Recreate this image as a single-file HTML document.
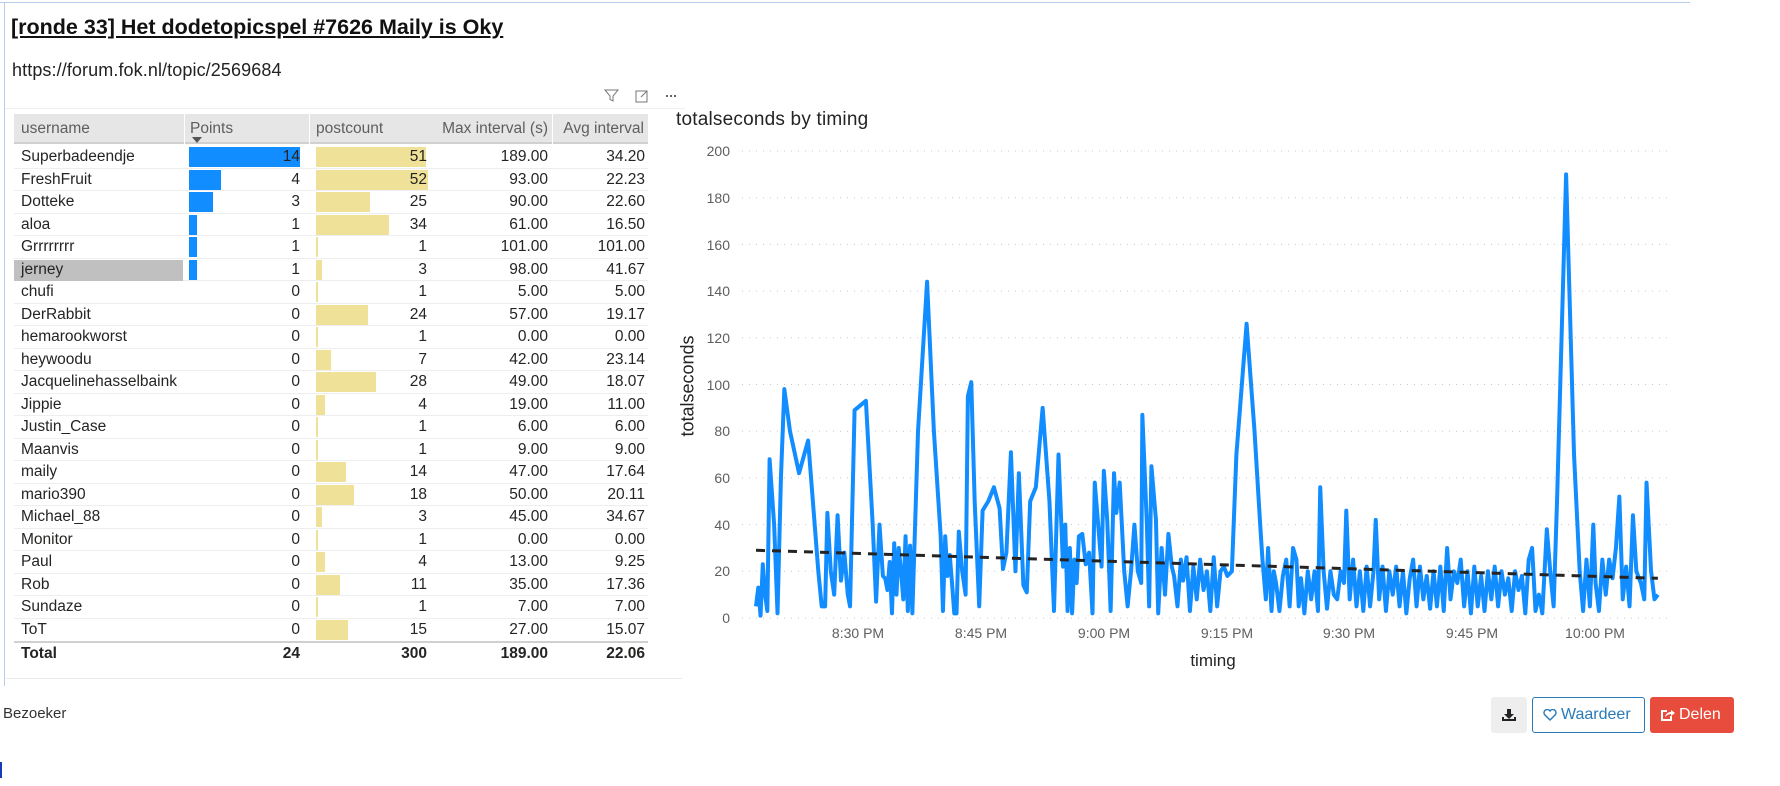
<!DOCTYPE html>
<html><head><meta charset="utf-8"><style>
*{margin:0;padding:0;box-sizing:border-box}
body{width:1780px;height:786px;background:#fff;font-family:"Liberation Sans",sans-serif;position:relative;overflow:hidden;color:#252423}
.a{position:absolute}
.title{left:11px;top:13px;font-size:21.5px;line-height:28px;font-weight:bold;text-decoration:underline;color:#111;letter-spacing:0}
.url{left:12px;top:60px;font-size:18px;color:#222;letter-spacing:0.1px}
.hdr{left:14px;top:114px;width:634px;height:30px;background:#e6e6e6;border-bottom:2px solid #d0d0d0}
.h{position:absolute;top:6px;font-size:15.5px;color:#605e5c}
.row{position:absolute;left:14px;width:634px;height:22.5px;border-bottom:1px solid #eee;font-size:15.5px}
.row span{position:absolute;top:2px}
.bb{position:absolute;background:#118dff;top:1px;height:20px;left:175px}
.by{position:absolute;background:#f0e199;top:1px;height:20px;left:302px}
.yl{position:absolute;right:0;font-size:14px;color:#605e5c}
.xl{position:absolute;font-size:14px;color:#605e5c;transform:translateX(-50%)}
</style></head><body>
<div class="a" style="left:0;top:2px;width:1690px;height:1px;background:#b9cdea"></div>
<div class="a" style="left:4px;top:2px;width:1px;height:684px;background:#b9cdea"></div>
<div class="a title">[ronde 33] Het dodetopicspel #7626 Maily is Oky</div>
<div class="a url">https://forum.fok.nl/topic/2569684</div>
<svg class="a" style="left:604px;top:88px" width="80" height="16" viewBox="0 0 80 16">
<path d="M1 2h13l-5 6v5l-3-1.5V8z" fill="none" stroke="#777" stroke-width="1"/>
<rect x="32" y="3" width="11" height="11" fill="none" stroke="#777"/>
<path d="M37 9l6-6M39 3h4v4" stroke="#777" fill="none"/>
<circle cx="63" cy="8" r="1.1" fill="#555"/><circle cx="67" cy="8" r="1.1" fill="#555"/><circle cx="71" cy="8" r="1.1" fill="#555"/>
</svg>
<div class="a" style="left:5px;top:108px;width:680px;height:1px;background:#eee"></div>
<div class="a hdr">
<span class="h" style="left:7px">username</span>
<span class="h" style="left:176px">Points</span>
<span class="a" style="left:178px;top:23px;width:0;height:0;border-left:5px solid transparent;border-right:5px solid transparent;border-top:6px solid #555"></span>
<span class="h" style="left:302px">postcount</span>
<span class="h" style="right:100px">Max interval (s)</span>
<span class="h" style="right:4px">Avg interval</span>
<div class="a" style="left:170px;top:0;width:1px;height:30px;background:#fff"></div>
<div class="a" style="left:295px;top:0;width:1px;height:30px;background:#fff"></div>
<div class="a" style="left:538px;top:0;width:1px;height:30px;background:#fff"></div>
</div>
<div class="a" style="left:14px;top:641px;width:634px;height:2px;background:#d0d0d0"></div>
<div class="row" style="top:643px;border:none;font-weight:bold">
<span style="left:7px">Total</span><span style="right:348px">24</span><span style="right:221px">300</span><span style="right:100px">189.00</span><span style="right:3px">22.06</span></div>
<div class="a" style="left:6px;top:678px;width:676px;height:1px;background:#eaeaea"></div>

<div class="row" style="top:146px"><div class="bb" style="width:111px"></div><div class="by" style="width:110px"></div><span style="left:7px">Superbadeendje</span><span style="right:348px">14</span><span style="right:221px">51</span><span style="right:100px">189.00</span><span style="right:3px">34.20</span></div>
<div class="row" style="top:168.5px"><div class="bb" style="width:32px"></div><div class="by" style="width:112px"></div><span style="left:7px">FreshFruit</span><span style="right:348px">4</span><span style="right:221px">52</span><span style="right:100px">93.00</span><span style="right:3px">22.23</span></div>
<div class="row" style="top:191px"><div class="bb" style="width:24px"></div><div class="by" style="width:54px"></div><span style="left:7px">Dotteke</span><span style="right:348px">3</span><span style="right:221px">25</span><span style="right:100px">90.00</span><span style="right:3px">22.60</span></div>
<div class="row" style="top:213.5px"><div class="bb" style="width:8px"></div><div class="by" style="width:73px"></div><span style="left:7px">aloa</span><span style="right:348px">1</span><span style="right:221px">34</span><span style="right:100px">61.00</span><span style="right:3px">16.50</span></div>
<div class="row" style="top:236px"><div class="bb" style="width:8px"></div><div class="by" style="width:2px"></div><span style="left:7px">Grrrrrrrr</span><span style="right:348px">1</span><span style="right:221px">1</span><span style="right:100px">101.00</span><span style="right:3px">101.00</span></div>
<div class="row" style="top:258.5px"><div class="a" style="left:0;top:1px;width:169px;height:21px;background:#c0c0c0"></div><div class="bb" style="width:8px"></div><div class="by" style="width:6px"></div><span style="left:7px">jerney</span><span style="right:348px">1</span><span style="right:221px">3</span><span style="right:100px">98.00</span><span style="right:3px">41.67</span></div>
<div class="row" style="top:281px"><div class="by" style="width:2px"></div><span style="left:7px">chufi</span><span style="right:348px">0</span><span style="right:221px">1</span><span style="right:100px">5.00</span><span style="right:3px">5.00</span></div>
<div class="row" style="top:303.5px"><div class="by" style="width:52px"></div><span style="left:7px">DerRabbit</span><span style="right:348px">0</span><span style="right:221px">24</span><span style="right:100px">57.00</span><span style="right:3px">19.17</span></div>
<div class="row" style="top:326px"><div class="by" style="width:2px"></div><span style="left:7px">hemarookworst</span><span style="right:348px">0</span><span style="right:221px">1</span><span style="right:100px">0.00</span><span style="right:3px">0.00</span></div>
<div class="row" style="top:348.5px"><div class="by" style="width:15px"></div><span style="left:7px">heywoodu</span><span style="right:348px">0</span><span style="right:221px">7</span><span style="right:100px">42.00</span><span style="right:3px">23.14</span></div>
<div class="row" style="top:371px"><div class="by" style="width:60px"></div><span style="left:7px">Jacquelinehasselbaink</span><span style="right:348px">0</span><span style="right:221px">28</span><span style="right:100px">49.00</span><span style="right:3px">18.07</span></div>
<div class="row" style="top:393.5px"><div class="by" style="width:9px"></div><span style="left:7px">Jippie</span><span style="right:348px">0</span><span style="right:221px">4</span><span style="right:100px">19.00</span><span style="right:3px">11.00</span></div>
<div class="row" style="top:416px"><div class="by" style="width:2px"></div><span style="left:7px">Justin_Case</span><span style="right:348px">0</span><span style="right:221px">1</span><span style="right:100px">6.00</span><span style="right:3px">6.00</span></div>
<div class="row" style="top:438.5px"><div class="by" style="width:2px"></div><span style="left:7px">Maanvis</span><span style="right:348px">0</span><span style="right:221px">1</span><span style="right:100px">9.00</span><span style="right:3px">9.00</span></div>
<div class="row" style="top:461px"><div class="by" style="width:30px"></div><span style="left:7px">maily</span><span style="right:348px">0</span><span style="right:221px">14</span><span style="right:100px">47.00</span><span style="right:3px">17.64</span></div>
<div class="row" style="top:483.5px"><div class="by" style="width:38px"></div><span style="left:7px">mario390</span><span style="right:348px">0</span><span style="right:221px">18</span><span style="right:100px">50.00</span><span style="right:3px">20.11</span></div>
<div class="row" style="top:506px"><div class="by" style="width:6px"></div><span style="left:7px">Michael_88</span><span style="right:348px">0</span><span style="right:221px">3</span><span style="right:100px">45.00</span><span style="right:3px">34.67</span></div>
<div class="row" style="top:528.5px"><div class="by" style="width:2px"></div><span style="left:7px">Monitor</span><span style="right:348px">0</span><span style="right:221px">1</span><span style="right:100px">0.00</span><span style="right:3px">0.00</span></div>
<div class="row" style="top:551px"><div class="by" style="width:9px"></div><span style="left:7px">Paul</span><span style="right:348px">0</span><span style="right:221px">4</span><span style="right:100px">13.00</span><span style="right:3px">9.25</span></div>
<div class="row" style="top:573.5px"><div class="by" style="width:24px"></div><span style="left:7px">Rob</span><span style="right:348px">0</span><span style="right:221px">11</span><span style="right:100px">35.00</span><span style="right:3px">17.36</span></div>
<div class="row" style="top:596px"><div class="by" style="width:2px"></div><span style="left:7px">Sundaze</span><span style="right:348px">0</span><span style="right:221px">1</span><span style="right:100px">7.00</span><span style="right:3px">7.00</span></div>
<div class="row" style="top:618.5px;border:none"><div class="by" style="width:32px"></div><span style="left:7px">ToT</span><span style="right:348px">0</span><span style="right:221px">15</span><span style="right:100px">27.00</span><span style="right:3px">15.07</span></div>

<div class="a" style="left:676px;top:109px;font-size:19px;color:#252423;letter-spacing:0.2px">totalseconds by timing</div>
<div class="a" style="left:688px;top:386px;transform:translate(-50%,-50%) rotate(-90deg);font-size:18px;color:#252423">totalseconds</div>
<div class="a" style="left:690px;top:0;width:40px;height:700px">
<span class="yl" style="top:143px">200</span><span class="yl" style="top:190px">180</span><span class="yl" style="top:237px">160</span><span class="yl" style="top:283px">140</span><span class="yl" style="top:330px">120</span><span class="yl" style="top:377px">100</span><span class="yl" style="top:423px">80</span><span class="yl" style="top:470px">60</span><span class="yl" style="top:517px">40</span><span class="yl" style="top:563px">20</span><span class="yl" style="top:610px">0</span>
</div>
<span class="xl" style="left:858px;top:625px">8:30 PM</span><span class="xl" style="left:981px;top:625px">8:45 PM</span><span class="xl" style="left:1104px;top:625px">9:00 PM</span><span class="xl" style="left:1227px;top:625px">9:15 PM</span><span class="xl" style="left:1349px;top:625px">9:30 PM</span><span class="xl" style="left:1472px;top:625px">9:45 PM</span><span class="xl" style="left:1595px;top:625px">10:00 PM</span>
<div class="a" style="left:1213px;top:651px;transform:translateX(-50%);font-size:17px;color:#252423">timing</div>
<svg class="a" style="left:0;top:0" width="1780" height="700">
<g stroke="#c8c8c8" stroke-width="1" stroke-dasharray="1 6">
<line x1="742" x2="1670" y1="151" y2="151"/><line x1="742" x2="1670" y1="197.7" y2="197.7"/><line x1="742" x2="1670" y1="244.4" y2="244.4"/><line x1="742" x2="1670" y1="291.1" y2="291.1"/><line x1="742" x2="1670" y1="337.8" y2="337.8"/><line x1="742" x2="1670" y1="384.5" y2="384.5"/><line x1="742" x2="1670" y1="431.2" y2="431.2"/><line x1="742" x2="1670" y1="477.9" y2="477.9"/><line x1="742" x2="1670" y1="524.6" y2="524.6"/><line x1="742" x2="1670" y1="571.3" y2="571.3"/><line x1="742" x2="1670" y1="618" y2="618"/>
</g>
<g transform="translate(756,618) scale(1.133,-2.335) translate(-665,0)">
<polyline fill="none" stroke="#118dff" stroke-width="4" stroke-linejoin="round" vector-effect="non-scaling-stroke" points="665,5 667,13 669,1 671,23 673,10 675,3 677,68 681,40 684,2 687,60 690,98 695,80 703,62 711,76 716,45 720,20 723,5 726,5 728,45 731,20 734,10 737,44 740,16 743,28 746,10 748,5 752,89 762,93 768,40 771,7 774,40 777,18 779,17 781,12 783,24 785,2 787,32 789,10 791,30 793,20 795,8 797,35 799,3 801,31 803,2 808,80 816,144 822,80 828,35 830,3 832,35 834,18 836,27 838,15 840,2 842,2 844,37 847,20 850,10 852,95 855,101 858,50 862,5 865,46 870,50 875,56 880,47 883,21 886,28 890,71 894,20 897,62 901,14 904,11 907,50 912,56 918,90 924,50 928,3 932,70 936,22 938,40 940,3 942,30 944,2 946,25 948,15 950,35 953,36 956,23 959,28 962,2 964,58 967,40 970,22 972,63 975,42 978,3 981,62 983,45 986,58 990,20 993,5 996,20 999,40 1002,20 1005,15 1006,87 1010,40 1012,5 1014,65 1018,42 1020,2 1023,30 1026,10 1029,36 1032,22 1034,18 1037,5 1040,25 1042,16 1045,26 1048,3 1051,22 1054,8 1057,25 1060,12 1063,20 1066,3 1069,26 1072,5 1075,20 1078,22 1081,18 1085,20 1089,70 1098,126 1105,80 1110,40 1112,25 1115,8 1117,30 1120,3 1122,20 1124,15 1127,3 1130,18 1133,25 1136,5 1139,30 1142,25 1144,5 1146,17 1149,2 1152,20 1155,8 1158,20 1161,3 1163,56 1166,20 1169,4 1172,20 1175,10 1178,8 1181,20 1184,15 1186,46 1189,8 1192,25 1195,5 1198,20 1201,3 1204,22 1207,5 1210,20 1212,42 1215,8 1218,22 1221,3 1224,20 1227,10 1230,22 1233,5 1236,20 1239,2 1242,17 1245,25 1248,5 1251,22 1254,8 1257,18 1260,4 1263,20 1266,5 1269,22 1272,3 1275,30 1278,8 1281,20 1284,15 1287,25 1290,5 1293,20 1296,2 1299,22 1302,5 1305,18 1308,3 1311,20 1314,8 1317,22 1320,5 1323,20 1326,10 1329,17 1332,3 1335,20 1338,12 1341,18 1344,2 1347,25 1350,30 1353,3 1356,10 1359,2 1363,38 1366,20 1369,5 1372,50 1380,190 1387,70 1392,20 1395,3 1398,25 1401,5 1404,40 1406,15 1409,3 1412,25 1415,10 1418,25 1421,17 1424,30 1427,52 1430,8 1433,22 1436,5 1439,44 1442,20 1446,15 1449,8 1451,58 1455,20 1458,8 1461,10"/>
<line x1="665" y1="29" x2="1461" y2="17" stroke="#252423" stroke-width="3" stroke-dasharray="9 7" vector-effect="non-scaling-stroke"/>
</g>
</svg>

<div class="a" style="left:3px;top:705px;font-size:15px;color:#333">Bezoeker</div>
<div class="a" style="left:0;top:762px;width:2px;height:16px;background:#1a3bb8"></div>
<div class="a" style="left:1491px;top:697px;width:36px;height:36px;background:#eee;border-radius:3px"></div>
<svg class="a" style="left:1501px;top:707px" width="16" height="16" viewBox="0 0 16 16"><path d="M6 2h4v5h3l-5 5-5-5h3z" fill="#222"/><path d="M1 10v4h14v-4h-2v2H3v-2z" fill="#222"/></svg>
<div class="a" style="left:1532px;top:697px;width:113px;height:36px;border:1px solid #2a7ab8;border-radius:3px;color:#2a7ab8;font-size:16px;line-height:34px;padding-left:28px">Waardeer</div>
<svg class="a" style="left:1543px;top:709px" width="14" height="12" viewBox="0 0 14 12"><path d="M7 11L1.5 5.5A3 3 0 0 1 7 2a3 3 0 0 1 5.5 3.5z" fill="none" stroke="#2a7ab8" stroke-width="1.4"/></svg>
<div class="a" style="left:1650px;top:697px;width:84px;height:36px;background:#e74c3c;border-radius:3px;color:#fff;font-size:16px;line-height:36px;padding-left:29px">Delen</div>
<svg class="a" style="left:1660px;top:708px" width="15" height="14" viewBox="0 0 15 14"><path d="M7 3H2v9h9V8" fill="none" stroke="#fff" stroke-width="2"/><path d="M5 9c1-4 4-5 6-5V2l4 3-4 3V6c-2 0-4 1-6 3z" fill="#fff"/></svg>
</body></html>
